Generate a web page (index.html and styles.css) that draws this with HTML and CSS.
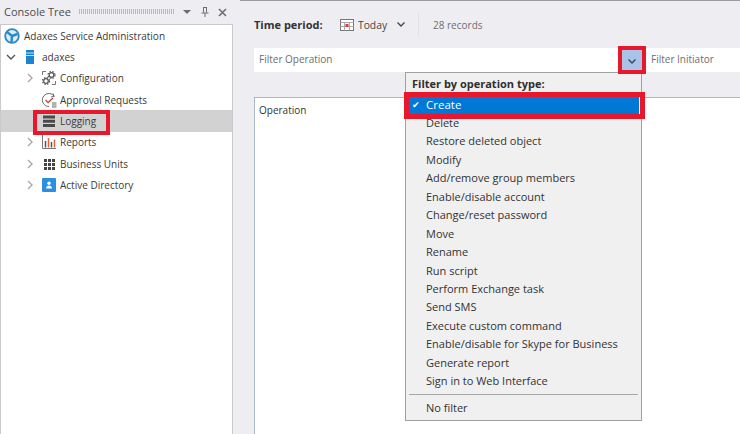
FILE: index.html
```html
<!DOCTYPE html>
<html lang="en">
<head>
<meta charset="utf-8">
<title>Adaxes Logging</title>
<link rel="stylesheet" href="styles.css">
</head>
<body>
<div class="app">
  <aside class="side">
    <header class="side-head">
      <span class="side-title">Console Tree</span>
      <span class="grip"></span>
      <svg class="hbtn" width="10" height="6" viewBox="0 0 10 6"><path d="M1 1h8L5 5z" fill="#6d6d75"/></svg>
      <svg class="hbtn" width="10" height="12" viewBox="0 0 10 12"><path d="M3 1.500h4M3.500 1.500v5M6.500 1.500v5M1.500 7h7M5 7v4" stroke="#6d6d75" fill="none"/></svg>
      <svg class="hbtn" width="9" height="9" viewBox="0 0 9 9"><path d="M1 1l7 7M8 1L1 8" stroke="#6d6d75" stroke-width="1.600" fill="none"/></svg>
    </header>
    <nav class="tree">
      <div class="row lvl0">
        <svg class="ico" width="16" height="16" viewBox="0 0 16 16"><circle cx="8" cy="8" r="6.800" fill="#dcecf6" stroke="#2a8ac4" stroke-width="1.800"/><path d="M8 8L3 3.800M8 8L13.500 6M8 8L7.500 14" stroke="#2a8ac4" stroke-width="2.400" fill="none"/></svg>
        <span>Adaxes Service Administration</span>
      </div>
      <div class="row lvl1">
        <svg class="chev" width="12" height="12" viewBox="0 0 12 12"><path d="M2 4l4 4 4-4" stroke="#555" stroke-width="1.400" fill="none"/></svg>
        <svg class="ico" width="16" height="16" viewBox="0 0 16 16"><rect x="4" y="1" width="8" height="14" fill="#1c85d0"/><path d="M4 4h8M4 6.500h8" stroke="#bfe0f6"/></svg>
        <span>adaxes</span>
      </div>
      <div class="row lvl2">
        <svg class="chev" width="12" height="12" viewBox="0 0 12 12"><path d="M4 2l4 4-4 4" stroke="#a8a8a8" stroke-width="1.400" fill="none"/></svg>
        <svg class="ico" width="16" height="16" viewBox="0 0 16 16"><path d="M1.500 5V1.500H5M11 14.500h3.500V11" stroke="#777" fill="none"/><circle cx="10.500" cy="5" r="2.300" fill="none" stroke="#555" stroke-width="1.200"/><circle cx="10.500" cy="5" r="3.500" fill="none" stroke="#555" stroke-width="1.200" stroke-dasharray="1.500 1.300"/><circle cx="5" cy="11" r="2.300" fill="none" stroke="#555" stroke-width="1.200"/><circle cx="5" cy="11" r="3.500" fill="none" stroke="#555" stroke-width="1.200" stroke-dasharray="1.500 1.300"/></svg>
        <span>Configuration</span>
      </div>
      <div class="row lvl2">
        <span class="chev-gap"></span>
        <svg class="ico" width="16" height="16" viewBox="0 0 16 16"><path d="M13 4A6.500 6.500 0 1 0 8 14.500" stroke="#666" fill="none"/><path d="M12 1.500l1.200 3-3 .3" stroke="#666" fill="none"/><path d="M4.500 8l2.500 2.500L12 6" stroke="#d8413a" stroke-width="1.300" fill="none"/><path d="M11 11h4.500M11 13h4.500M11 15h4.500" stroke="#666"/></svg>
        <span>Approval Requests</span>
      </div>
      <div class="row lvl2 selected">
        <span class="chev-gap"></span>
        <svg class="ico" width="16" height="16" viewBox="0 0 16 16"><path d="M2 2.500h12v3H2zM2 6.800h12v3H2zM2 11h12v3H2z" fill="#4a4a4a"/></svg>
        <span>Logging</span>
      </div>
      <div class="row lvl2">
        <svg class="chev" width="12" height="12" viewBox="0 0 12 12"><path d="M4 2l4 4-4 4" stroke="#a8a8a8" stroke-width="1.400" fill="none"/></svg>
        <svg class="ico" width="16" height="16" viewBox="0 0 16 16"><path d="M1.500 1v13.500H15" stroke="#777" fill="none"/><path d="M4.500 7v6.500" stroke="#555" stroke-width="1.500"/><path d="M7.500 4v9.500" stroke="#d9663a" stroke-width="1.500"/><path d="M10.500 8v5.500" stroke="#555" stroke-width="1.500"/><path d="M13.500 5.500v8" stroke="#d9663a" stroke-width="1.500"/></svg>
        <span>Reports</span>
      </div>
      <div class="row lvl2">
        <svg class="chev" width="12" height="12" viewBox="0 0 12 12"><path d="M4 2l4 4-4 4" stroke="#a8a8a8" stroke-width="1.400" fill="none"/></svg>
        <svg class="ico" width="16" height="16" viewBox="0 0 16 16"><path d="M3 3h3v3H3zM7 3h3v3H7zM11 3h3v3h-3zM3 7h3v3H3zM7 7h3v3H7zM11 7h3v3h-3zM3 11h3v3H3zM7 11h3v3H7zM11 11h3v3h-3z" fill="#444"/></svg>
        <span>Business Units</span>
      </div>
      <div class="row lvl2">
        <svg class="chev" width="12" height="12" viewBox="0 0 12 12"><path d="M4 2l4 4-4 4" stroke="#a8a8a8" stroke-width="1.400" fill="none"/></svg>
        <svg class="ico" width="16" height="16" viewBox="0 0 16 16"><rect x="1" y="1" width="14" height="14" rx="1" fill="#2a8fe0"/><circle cx="8" cy="6.200" r="1.700" fill="#fff"/><path d="M5 11.500c0-4 6-4 6 0z" fill="#fff"/></svg>
        <span>Active Directory</span>
      </div>
    </nav>
  </aside>
  <main class="main">
    <div class="toolbar">
      <span class="tb-label">Time period:</span>
      <span class="tb-period">
        <svg width="14" height="12" viewBox="0 0 14 12"><rect x=".5" y=".5" width="13" height="11" fill="#fff" stroke="#777"/><path d="M.5 3.500h13M4.500 3.500v8M9.500 3.500v8M.5 7.500h13" stroke="#aaa"/><rect x="5.500" y="5" width="3" height="3" fill="#d2423a"/></svg>
        <span>Today</span>
        <svg class="tb-chev" width="10" height="7" viewBox="0 0 10 7"><path d="M1.500 1.500L5 5l3.500-3.500" stroke="#444" stroke-width="1.300" fill="none"/></svg>
      </span>
      <span class="tb-sep"></span>
      <span class="tb-count">28 records</span>
    </div>
    <div class="filters">
      <div class="filter-op">
        <span class="filter-text">Filter Operation</span>
        <span class="filter-btn"><svg width="10" height="7" viewBox="0 0 10 7"><path d="M1.500 1.500L5 5l3.500-3.500" stroke="#3b4a5e" stroke-width="1.500" fill="none"/></svg></span>
      </div>
      <span class="filter-text filter-init">Filter Initiator</span>
    </div>
    <div class="grid">
      <div class="grid-head">Operation</div>
    </div>
  </main>
</div>

<div class="menu">
  <div class="menu-title">Filter by operation type:</div>
  <div class="menu-item active"><span class="tick">✔</span>Create</div>
  <div class="menu-item">Delete</div>
  <div class="menu-item">Restore deleted object</div>
  <div class="menu-item">Modify</div>
  <div class="menu-item">Add/remove group members</div>
  <div class="menu-item">Enable/disable account</div>
  <div class="menu-item">Change/reset password</div>
  <div class="menu-item">Move</div>
  <div class="menu-item">Rename</div>
  <div class="menu-item">Run script</div>
  <div class="menu-item">Perform Exchange task</div>
  <div class="menu-item">Send SMS</div>
  <div class="menu-item">Execute custom command</div>
  <div class="menu-item">Enable/disable for Skype for Business</div>
  <div class="menu-item">Generate report</div>
  <div class="menu-item">Sign in to Web Interface</div>
  <div class="menu-rule"></div>
  <div class="menu-item">No filter</div>
</div>

<div class="mark mark-logging"></div>
<div class="mark mark-btn"></div>
<div class="mark mark-create"></div>
</body>
</html>
```
FILE: styles.css
```css
* { box-sizing: border-box; }
html, body { margin: 0; height: 100%; }
body {
  position: relative;
  width: 740px;
  height: 434px;
  overflow: hidden;
  background: #eeeef2;
  font-family: "Open Sans", "Noto Sans", sans-serif;
  font-size: 10px;
  color: #3a3a3a;
}
.app { display: flex; height: 434px; }

.side { width: 233px; display: flex; flex-direction: column; flex: none; }
.side-head {
  height: 24px;
  display: flex;
  align-items: center;
  gap: 8px;
  padding: 0 6px 0 4px;
  flex: none;
}
.side-title { font-size: 11px; color: #4c4c4c; margin-bottom: 2px; }
.grip {
  flex: 1;
  height: 5px;
  margin-bottom: 1px;
  background: repeating-linear-gradient(90deg, #b9b9c0 0 1px, transparent 1px 2px);
}
.hbtn { flex: none; }

.tree {
  flex: 1;
  background: #fff;
  border: 1px solid #c9c9ce;
  border-bottom: 0;
}
.row { height: 21.330px; display: flex; align-items: center; white-space: nowrap; }
.row .ico { flex: none; }
.lvl0 { padding-left: 3px; }
.lvl0 .ico { margin-right: 4px; }
.lvl1 { padding-left: 4px; }
.lvl1 .chev { margin-right: 5px; }
.lvl1 .ico { margin-right: 4px; }
.lvl2 { padding-left: 23px; }
.lvl2 .chev, .chev-gap { flex: none; width: 12px; margin-right: 5px; }
.lvl2 .ico { margin-right: 3px; }
.selected { background: #d2d2d2; }

.main { flex: 1; margin-left: 7px; border-top: 1px solid #9a9a9a; display: flex; flex-direction: column; padding-left: 14px; min-width: 0; }
.toolbar { height: 47px; display: flex; align-items: center; flex: none; }
.tb-label { font-size: 11px; font-weight: 700; color: #333; width: 86px; flex: none; }
.tb-period { display: flex; align-items: center; gap: 4px; width: 78px; flex: none; color: #444; font-size: 10.300px; }
.tb-chev { margin-left: 5px; }
.tb-sep { width: 1px; height: 25px; background: #e2e2e6; flex: none; }
.tb-count { margin-left: 14px; color: #6f6f6f; }

.filters { height: 24px; background: #fff; display: flex; align-items: center; flex: none; white-space: nowrap; }
.filter-op { width: 388px; height: 24px; display: flex; align-items: center; justify-content: space-between; padding-left: 5px; flex: none; }
.filter-text { color: #6d6d6d; margin-bottom: 2px; }
.filter-btn { width: 20px; height: 20px; background: #a9c4e8; display: flex; align-items: center; justify-content: center; padding-top: 2px; }
.filter-init { margin-left: 9px; }

.grid { flex: 1; margin-top: 25px; background: #fff; border: 1px solid #a9b7c6; border-bottom: 0; border-right: 0; }
.grid-head { padding: 5px 4px; color: #333; }

.menu {
  position: absolute;
  left: 405px;
  top: 72px;
  width: 237px;
  height: 349px;
  background: #f0f0f0;
  border: 1px solid #a0a0a0;
  padding-top: 2px;
  color: #333;
  font-size: 11px;
}
.menu-title { font-weight: 700; height: 18px; line-height: 18px; padding-left: 6px; color: #2f2f2f; margin-bottom: 3px; }
.menu-item { height: 18.450px; line-height: 18.450px; padding-left: 20px; white-space: nowrap; }
.menu-item.active { background: #0078d7; color: #fff; position: relative; font-size: 11.500px; height: 18px; line-height: 18px; margin: 0 2px; padding-left: 18px; }
.tick { position: absolute; left: 4px; top: 0; font-size: 9px; }
.menu-rule { height: 1px; background: #a8a8a8; margin: 3px 3px 4px; }

.mark { position: absolute; border: 4px solid #e8172c; }
.mark-logging { left: 33px; top: 110px; width: 77px; height: 25px; }
.mark-btn { left: 618px; top: 46px; width: 28px; height: 28px; }
.mark-create { left: 404px; top: 92px; width: 241px; height: 27px; border-width: 5px; }
```
